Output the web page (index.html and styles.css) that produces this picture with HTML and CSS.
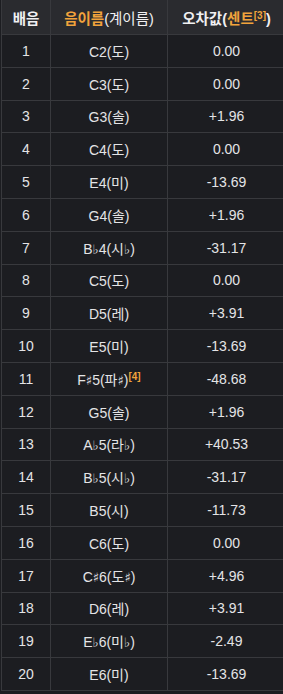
FILE: index.html
```html
<!DOCTYPE html>
<html lang="ko">
<head>
<meta charset="utf-8">
<link rel="stylesheet" href="styles.css">
</head>
<body>
<div class="wrap">
<table class="tbl">
<colgroup><col class="c1"><col class="c2"><col class="c3"></colgroup>
<thead>
<tr><th>배음</th><th><span class="hl">음이름</span><span class="lt">(계이름)</span></th><th>오차값(<span class="hl">센트</span><sup class="ref">[3]</sup>)</th></tr>
</thead>
<tbody>
<tr><td>1</td><td>C2(도)</td><td>0.00</td></tr>
<tr><td>2</td><td>C3(도)</td><td>0.00</td></tr>
<tr><td>3</td><td>G3(솔)</td><td>+1.96</td></tr>
<tr><td>4</td><td>C4(도)</td><td>0.00</td></tr>
<tr><td>5</td><td>E4(미)</td><td>-13.69</td></tr>
<tr><td>6</td><td>G4(솔)</td><td>+1.96</td></tr>
<tr><td>7</td><td>B<span class="acc">♭</span>4(시<span class="acc">♭</span>)</td><td>-31.17</td></tr>
<tr><td>8</td><td>C5(도)</td><td>0.00</td></tr>
<tr><td>9</td><td>D5(레)</td><td>+3.91</td></tr>
<tr><td>10</td><td>E5(미)</td><td>-13.69</td></tr>
<tr><td>11</td><td>F<span class="acc">♯</span>5(파<span class="acc">♯</span>)<sup class="ref">[4]</sup></td><td>-48.68</td></tr>
<tr><td>12</td><td>G5(솔)</td><td>+1.96</td></tr>
<tr><td>13</td><td>A<span class="acc">♭</span>5(라<span class="acc">♭</span>)</td><td>+40.53</td></tr>
<tr><td>14</td><td>B<span class="acc">♭</span>5(시<span class="acc">♭</span>)</td><td>-31.17</td></tr>
<tr><td>15</td><td>B5(시)</td><td>-11.73</td></tr>
<tr><td>16</td><td>C6(도)</td><td>0.00</td></tr>
<tr><td>17</td><td>C<span class="acc">♯</span>6(도<span class="acc">♯</span>)</td><td>+4.96</td></tr>
<tr><td>18</td><td>D6(레)</td><td>+3.91</td></tr>
<tr><td>19</td><td>E<span class="acc">♭</span>6(미<span class="acc">♭</span>)</td><td>-2.49</td></tr>
<tr><td>20</td><td>E6(미)</td><td>-13.69</td></tr>
</tbody>
</table>
</div>
</body>
</html>
```
FILE: styles.css
```css
html, body {
  margin: 0;
  padding: 0;
  background: #1c1d21;
}
.wrap {
  width: 283px;
  height: 694px;
  overflow: hidden;
  padding-left: 1px;
  box-sizing: border-box;
}
.tbl {
  border-collapse: collapse;
  width: 284px;
  table-layout: fixed;
  font-family: "Liberation Sans", "Noto Sans CJK KR", sans-serif;
  font-size: 14px;
  color: #e4e4e6;
  background: #1c1d21;
}
.c1 { width: 49px; }
.c2 { width: 117px; }
.c3 { width: 118px; }
.tbl th, .tbl td {
  border: 1px solid #38393d;
  text-align: center;
  white-space: nowrap;
  padding: 0 4px;
}
.tbl th {
  background: #2a2b2f;
  color: #f0f0f2;
  font-weight: bold;
  height: 34px;
  border-top: none;
  font-size: 14.5px;
}
.tbl td {
  height: 31.8px;
}
.hl {
  color: #f1a33c;
}
.lt {
  font-weight: normal;
}
.ref {
  color: #f1a33c;
  font-size: 10px;
  font-weight: bold;
  line-height: 0;
  vertical-align: 5px;
}
.acc {
  font-family: "DejaVu Sans", sans-serif;
  font-size: 13px;
}
```
